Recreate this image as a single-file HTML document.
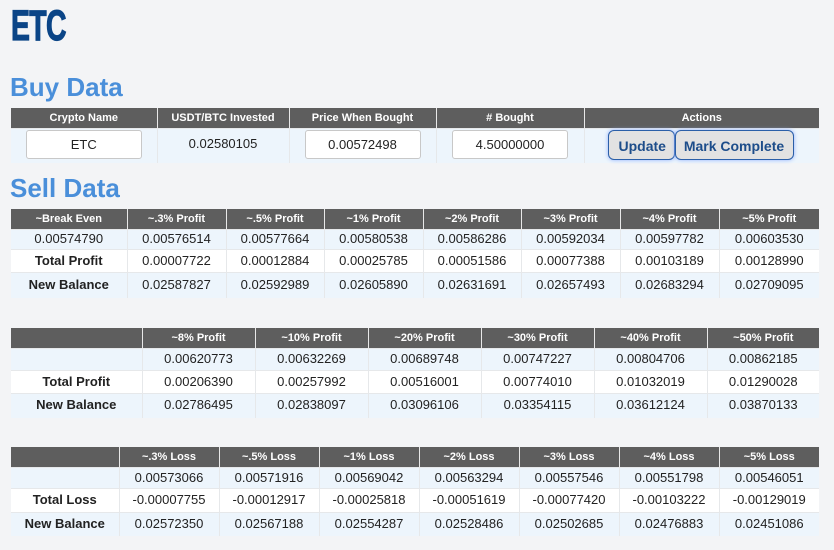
<!DOCTYPE html>
<html><head><style>
body{margin:0;width:834px;height:550px;background:#f3f4f6;font-family:"Liberation Sans",Arial,sans-serif;position:relative;overflow:hidden}
h1{position:absolute;left:11px;top:2px;margin:0;font-family:"Liberation Sans Narrow","Liberation Sans",sans-serif;font-weight:bold;font-size:43px;color:#0b4587;transform:scaleX(.66);transform-origin:left;letter-spacing:-1px;-webkit-text-stroke:1.2px #0b4587}
h2{position:absolute;left:10px;margin:0;font-size:26px;font-weight:bold;color:#4a8fda}
table{position:absolute;left:11px;width:808px;border-collapse:collapse;table-layout:fixed}
th{background:#5e5e5e;color:#fff;font-size:11px;font-weight:bold;height:20px;padding:0;border-left:1px solid #e8e8e8;text-align:center}
th:first-child{border-left:none}
td{font-size:13px;color:#222;text-align:center;padding:0 0 2px 0;border-left:1px solid #e6e8ea;border-top:1px solid #e6e8ea}
td:first-child{border-left:none}
tr.b td{background:#edf5fc}
tr.w td{background:#fff}
td.l{font-weight:bold}
.inp{display:inline-block;width:114px;height:27px;line-height:27px;background:#fff;border:1px solid #c8c8c8;border-radius:3px;font-size:13px}
.btn{display:inline-block;height:28px;line-height:30px;background:#e2e2e2;border:1px solid #2b5fa8;border-radius:6px;color:#1d4d8a;font-weight:bold;font-size:14px;padding:0 10px;box-shadow:0 0 4px #8fb0ff;vertical-align:middle}
</style></head><body>
<h1>ETC</h1>
<h2 style="top:72px">Buy Data</h2>
<table style="top:108px">
<colgroup><col style="width:146px"><col style="width:132px"><col style="width:147px"><col style="width:148px"><col style="width:235px"></colgroup>
<tr><th>Crypto Name</th><th>USDT/BTC Invested</th><th>Price When Bought</th><th># Bought</th><th>Actions</th></tr>
<tr class="b" style="height:34px"><td><span class="inp">ETC</span></td><td style="vertical-align:top;padding-top:7px">0.02580105</td><td><span class="inp">0.00572498</span></td><td><span class="inp">4.50000000</span></td><td style="text-align:left;padding-left:23px"><span class="btn" style="width:45px;text-align:center">Update</span><span class="btn" style="width:107px;text-align:center;padding:0 5px">Mark Complete</span></td></tr>
</table>
<h2 style="top:173px">Sell Data</h2>
<table style="top:209px">
<colgroup><col style="width:116px"><col style="width:99px"><col style="width:98px"><col style="width:99px"><col style="width:98px"><col style="width:99px"><col style="width:99px"><col style="width:100px"></colgroup>
<tr><th>~Break Even</th><th>~.3% Profit</th><th>~.5% Profit</th><th>~1% Profit</th><th>~2% Profit</th><th>~3% Profit</th><th>~4% Profit</th><th>~5% Profit</th></tr>
<tr class="b" style="height:20px"><td>0.00574790</td><td>0.00576514</td><td>0.00577664</td><td>0.00580538</td><td>0.00586286</td><td>0.00592034</td><td>0.00597782</td><td>0.00603530</td></tr>
<tr class="w" style="height:23px"><td class="l">Total Profit</td><td>0.00007722</td><td>0.00012884</td><td>0.00025785</td><td>0.00051586</td><td>0.00077388</td><td>0.00103189</td><td>0.00128990</td></tr>
<tr class="b" style="height:25px"><td class="l">New Balance</td><td>0.02587827</td><td>0.02592989</td><td>0.02605890</td><td>0.02631691</td><td>0.02657493</td><td>0.02683294</td><td>0.02709095</td></tr>
</table>
<table style="top:328px">
<colgroup><col style="width:131px"><col style="width:113px"><col style="width:113px"><col style="width:113px"><col style="width:113px"><col style="width:113px"><col style="width:112px"></colgroup>
<tr><th></th><th>~8% Profit</th><th>~10% Profit</th><th>~20% Profit</th><th>~30% Profit</th><th>~40% Profit</th><th>~50% Profit</th></tr>
<tr class="b" style="height:22px"><td></td><td>0.00620773</td><td>0.00632269</td><td>0.00689748</td><td>0.00747227</td><td>0.00804706</td><td>0.00862185</td></tr>
<tr class="w" style="height:23px"><td class="l">Total Profit</td><td>0.00206390</td><td>0.00257992</td><td>0.00516001</td><td>0.00774010</td><td>0.01032019</td><td>0.01290028</td></tr>
<tr class="b" style="height:24px"><td class="l">New Balance</td><td>0.02786495</td><td>0.02838097</td><td>0.03096106</td><td>0.03354115</td><td>0.03612124</td><td>0.03870133</td></tr>
</table>
<table style="top:447px">
<colgroup><col style="width:108px"><col style="width:100px"><col style="width:100px"><col style="width:100px"><col style="width:100px"><col style="width:100px"><col style="width:100px"><col style="width:100px"></colgroup>
<tr><th></th><th>~.3% Loss</th><th>~.5% Loss</th><th>~1% Loss</th><th>~2% Loss</th><th>~3% Loss</th><th>~4% Loss</th><th>~5% Loss</th></tr>
<tr class="b" style="height:21px"><td></td><td>0.00573066</td><td>0.00571916</td><td>0.00569042</td><td>0.00563294</td><td>0.00557546</td><td>0.00551798</td><td>0.00546051</td></tr>
<tr class="w" style="height:24px"><td class="l">Total Loss</td><td>-0.00007755</td><td>-0.00012917</td><td>-0.00025818</td><td>-0.00051619</td><td>-0.00077420</td><td>-0.00103222</td><td>-0.00129019</td></tr>
<tr class="b" style="height:23px"><td class="l">New Balance</td><td>0.02572350</td><td>0.02567188</td><td>0.02554287</td><td>0.02528486</td><td>0.02502685</td><td>0.02476883</td><td>0.02451086</td></tr>
</table>
</body></html>
